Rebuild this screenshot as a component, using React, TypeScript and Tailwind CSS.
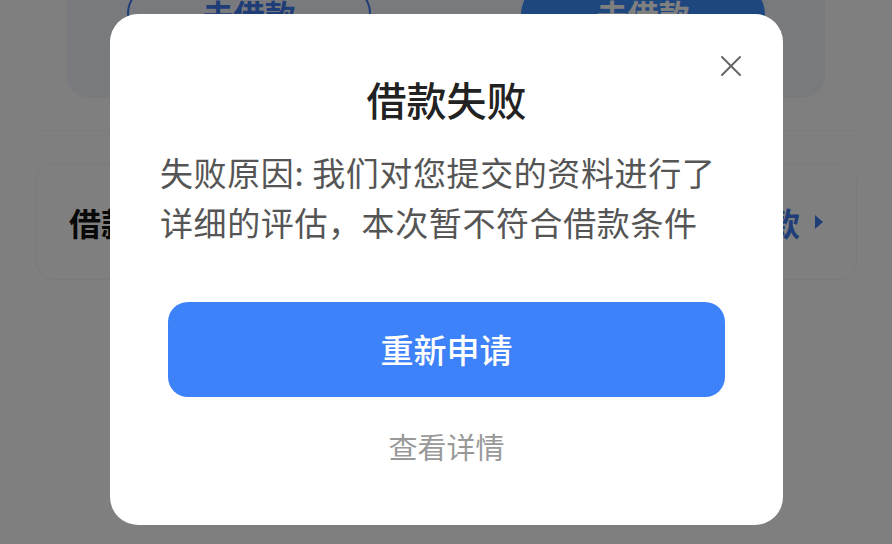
import React from 'react';
import { X } from 'lucide-react';

const font = { fontFamily: '"Noto Sans CJK SC", "Noto Sans", sans-serif' };

const App = () => {
  return (
    <div className="relative w-[892px] h-[544px] overflow-hidden bg-white" style={font}>
      {/* page behind the dialog */}
      <div className="flex flex-col">
        <div className="-mt-[40px] mx-[67px] h-[138px] rounded-[22px] bg-[#f2f4fc] flex justify-between px-[60px] pt-[24px]">
          <div className="w-[244px] h-[60px] rounded-full border-2 border-[#3f7cf0] flex items-center justify-center text-[31px] font-bold text-[#3f7cf0]">
            去借款
          </div>
          <div className="w-[244px] h-[60px] rounded-full bg-[#3c8cff] flex items-center justify-center text-[31px] font-bold text-white">
            去借款
          </div>
        </div>
        <div className="mt-[32px] mx-[36px] h-[1px] bg-[#f6f6f6]"></div>
        <div className="mt-[32px] mx-[35px] h-[117px] rounded-[20px] border border-[#f4f4f4] bg-white flex items-center justify-between pl-[33px] pr-[32px]">
          <span className="text-[32px] font-bold text-[#111]">借款记录</span>
          <span className="flex items-center gap-[14px] text-[32px] font-bold text-[#3f7cf0]">
            去还款
            <svg width="10" height="14" viewBox="0 0 10 14">
              <path d="M1 0 L9 7 L1 14 Z" fill="#3f7cf0" />
            </svg>
          </span>
        </div>
      </div>

      {/* overlay */}
      <div className="absolute inset-0 bg-black/50">
        <div className="relative ml-[110px] mt-[14px] w-[673px] h-[511px] rounded-[28px] bg-white flex flex-col">
          <button className="absolute right-[34px] top-[34px] text-[#666]">
            <X size={36} strokeWidth={1.3} />
          </button>
          <h2 className="pt-[61px] text-center text-[40px] leading-[48px] font-medium text-[#222]">
            借款失败
          </h2>
          <p className="mt-[24px] px-[50px] text-[33px] leading-[50px] text-[#555] tracking-[0.6px]">
            失败原因: 我们对您提交的资料进行了详细的评估，本次暂不符合借款条件
          </p>
          <div className="px-[58px] mt-[55px]">
            <button className="w-full h-[95px] rounded-[20px] bg-[#3d82f8] text-white text-[33px] font-medium">
              重新申请
            </button>
          </div>
          <div className="mt-[29px] text-center text-[29px] leading-[40px] text-[#999]">
            查看详情
          </div>
        </div>
      </div>
    </div>
  );
};

export default App;
